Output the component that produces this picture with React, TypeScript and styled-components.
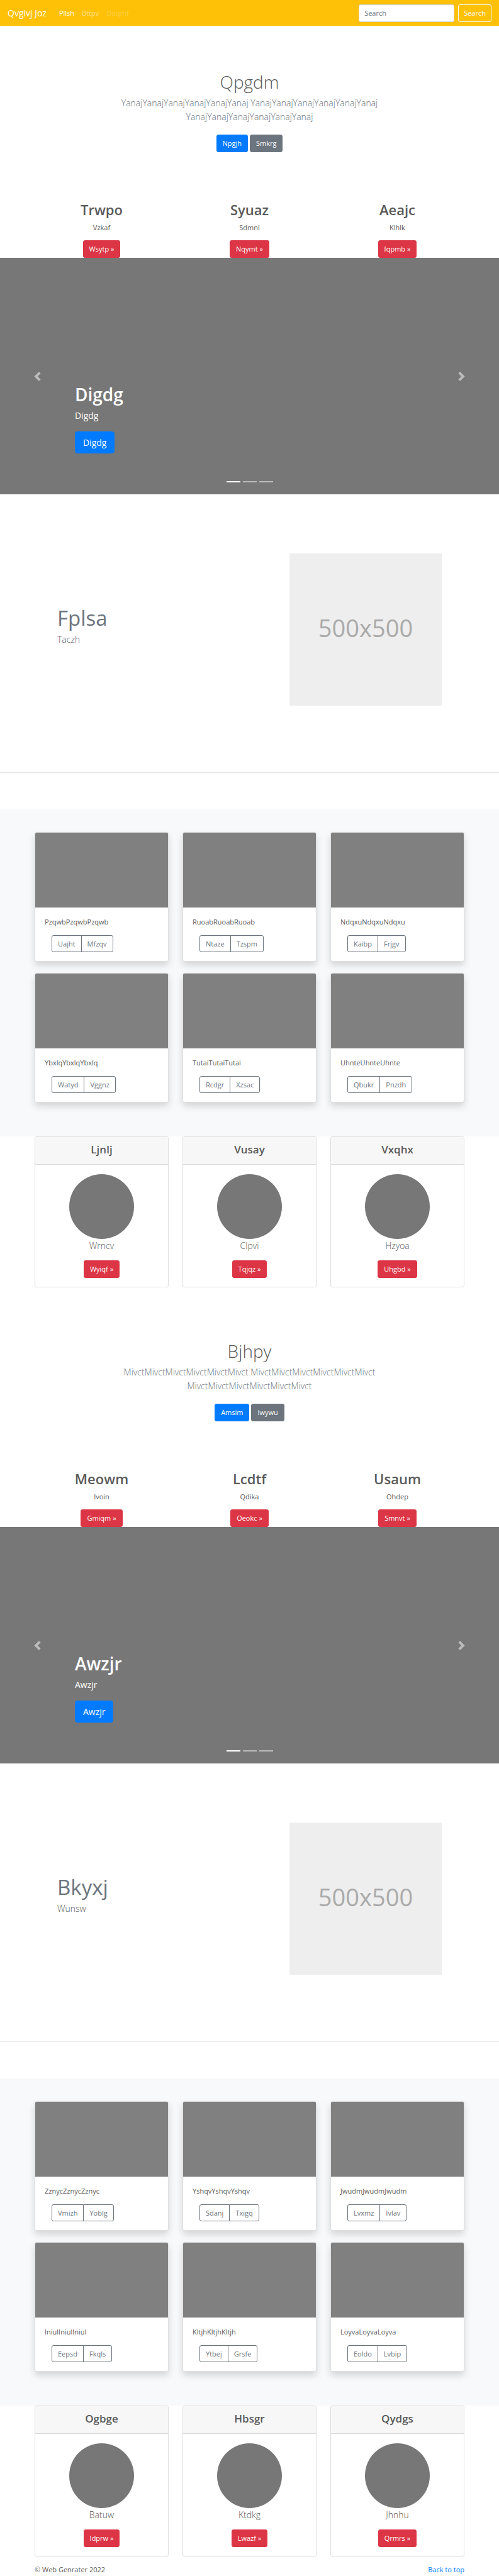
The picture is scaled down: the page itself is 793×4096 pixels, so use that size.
import React from "react";
import styled, { createGlobalStyle, css } from "styled-components";

const GlobalStyle = createGlobalStyle`
  *, *::before, *::after { box-sizing: border-box; }
  body {
    margin: 0;
    background: #fff;
    color: #5a5a5a;
    font-family: "Segoe UI", "Open Sans", "Noto Sans", sans-serif;
    font-size: 11px;
    line-height: 18px;
  }
  h1, h2, h4, p { margin: 0; }
  button, input { font-family: inherit; }
  a { color: #007bff; text-decoration: none; }
`;

/* ---------- Buttons ---------- */

const tones = { primary: "#007bff", secondary: "#6c757d", danger: "#dc3545" };

const Button = styled.button<{ $tone: keyof typeof tones; $large?: boolean }>`
  height: 28px;
  padding: 0 9px;
  border: 1px solid ${(p) => tones[p.$tone]};
  border-radius: 3px;
  background: ${(p) => tones[p.$tone]};
  color: #fff;
  font-size: 11px;
  line-height: 18px;
  cursor: pointer;
  ${(p) =>
    p.$large &&
    css`
      height: 35px;
      padding: 0 12px;
      border-radius: 4px;
      font-size: 14px;
    `}
`;

/* ---------- Navigation bar ---------- */

const Navbar = styled.nav`
  display: flex;
  align-items: center;
  height: 41px;
  padding: 0 12px;
  background: #ffc107;
`;

const Brand = styled.a`
  margin-right: 20px;
  color: #fff;
  font-size: 14px;
  line-height: 22px;
`;

const NavLinks = styled.div`
  display: flex;
  flex: 1;
  gap: 12px;
`;

const NavLink = styled.a<{ $opacity: number }>`
  color: rgba(255, 255, 255, ${(p) => p.$opacity});
`;

const SearchForm = styled.form`
  display: flex;
  gap: 6px;
`;

const SearchInput = styled.input`
  width: 152px;
  height: 28px;
  padding: 0 8px;
  border: 1px solid #ced4da;
  border-radius: 3px;
  background: #fff;
  color: #495057;
  font-size: 11px;
  &::placeholder { color: #6c757d; opacity: 1; }
`;

const SearchButton = styled.button`
  height: 28px;
  padding: 0 8px;
  border: 1px solid #f8f9fa;
  border-radius: 3px;
  background: transparent;
  color: #f8f9fa;
  font-size: 11px;
`;

/* ---------- Hero ---------- */

const Hero = styled.section`
  padding: 71px 55px 77px;
  text-align: center;
`;

const HeroTitle = styled.h1`
  margin-bottom: 5px;
  font-size: 28px;
  font-weight: 300;
  line-height: 36px;
`;

const Lead = styled.p`
  max-width: 440px;
  margin: 0 auto 17px;
  color: #6c757d;
  font-size: 14px;
  font-weight: 300;
  line-height: 22px;
`;

const ButtonRow = styled.div`
  display: flex;
  justify-content: center;
  gap: 3px;
`;

/* ---------- Three-column rows ---------- */

const Columns = styled.div`
  display: grid;
  grid-template-columns: repeat(3, 1fr);
  gap: 18px 22px;
  padding: 0 55px;
`;

const Feature = styled.div`
  display: flex;
  flex-direction: column;
  align-items: center;
`;

const FeatureTitle = styled.h2`
  margin-bottom: 6px;
  font-size: 22px;
  font-weight: 600;
  line-height: 28px;
`;

const FeatureText = styled.p`
  margin-bottom: 11px;
`;

/* ---------- Carousel ---------- */

const CarouselFrame = styled.section`
  position: relative;
  display: flex;
  flex-direction: column;
  justify-content: flex-end;
  align-items: flex-start;
  height: 376px;
  padding: 0 15% 65px;
  background: #777;
  color: #fff;
`;

const CarouselTitle = styled.h1`
  margin-bottom: 5px;
  font-size: 28px;
  font-weight: 600;
  line-height: 35px;
`;

const CarouselText = styled.p`
  margin-bottom: 14px;
  font-size: 14px;
  line-height: 22px;
`;

const Control = styled.button<{ $side: "left" | "right" }>`
  position: absolute;
  top: 0;
  bottom: 0;
  ${(p) => p.$side}: 0;
  display: flex;
  align-items: center;
  justify-content: center;
  width: 15%;
  padding: 0;
  border: 0;
  background: none;
  opacity: 0.5;
`;

const Indicators = styled.div`
  position: absolute;
  right: 0;
  bottom: 19px;
  left: 0;
  display: flex;
  justify-content: center;
  gap: 4px;
`;

const Indicator = styled.button<{ $active: boolean }>`
  width: 22px;
  height: 2px;
  padding: 0;
  border: 0;
  background: #fff;
  opacity: ${(p) => (p.$active ? 1 : 0.5)};
`;

/* ---------- Featurette ---------- */

const FeaturetteRow = styled.section`
  display: flex;
  align-items: center;
  justify-content: space-between;
  padding: 94px 91px 106px;
`;

const FeaturetteTitle = styled.h2`
  margin-bottom: 2px;
  color: #6c757d;
  font-size: 33px;
  font-weight: 400;
  line-height: 42px;
`;

const LightText = styled.p`
  margin-bottom: 12px;
  font-size: 14px;
  font-weight: 300;
  line-height: 22px;
`;

const Placeholder = styled.div`
  display: flex;
  align-items: center;
  justify-content: center;
  width: 242px;
  height: 242px;
  padding-bottom: 6px;
  background: #eee;
  color: #aaa;
  font-size: 38px;
`;

const Divider = styled.hr`
  height: 1px;
  margin: 0 0 58px;
  border: 0;
  background: #e5e5e5;
`;

/* ---------- Album ---------- */

const Album = styled.section`
  padding: 36px 0 54px;
  background: #f8f9fa;
`;

const Card = styled.article`
  overflow: hidden;
  border: 1px solid #dfdfdf;
  border-radius: 3px;
  background: #fff;
`;

const AlbumCard = styled(Card)`
  box-shadow: 0 6px 12px rgba(0, 0, 0, 0.15);
`;

const Thumbnail = styled.div`
  height: 119px;
  background: #808080;
`;

const AlbumBody = styled.div`
  padding: 14px 15px;
`;

const AlbumText = styled.p`
  margin-bottom: 12px;
`;

const ButtonGroup = styled.div`
  display: flex;
  padding-left: 11px;
`;

const GroupButton = styled.button`
  height: 27px;
  padding: 0 9px;
  border: 1px solid #6c757d;
  background: transparent;
  color: #6c757d;
  font-size: 11px;
  &:first-child { border-radius: 3px 0 0 3px; }
  &:last-child { margin-left: -1px; border-radius: 0 3px 3px 0; }
`;

/* ---------- Profile cards ---------- */

const Profiles = styled(Columns)`
  margin-bottom: 12px;
`;

const ProfileTitle = styled.h4`
  padding: 9px 0 13px;
  border-bottom: 1px solid #d8d8d8;
  background: #f7f7f7;
  font-size: 17px;
  font-weight: 600;
  line-height: 21px;
  text-align: center;
`;

const ProfileBody = styled.div`
  display: flex;
  flex-direction: column;
  align-items: center;
  padding: 15px 15px 14px;
`;

const Avatar = styled.div`
  width: 103px;
  height: 103px;
  border-radius: 50%;
  background: #777;
`;

const Footer = styled.footer`
  display: flex;
  justify-content: space-between;
  padding: 0 55px 1px;
`;

/* ---------- Content ---------- */

type Item = { title: string; text: string; action: string };

type Block = {
  hero: { title: string; text: string; actions: [string, string] };
  features: Item[];
  slide: string;
  featurette: { title: string; text: string };
  album: { word: string; actions: [string, string] }[];
  profiles: Item[];
};

const blocks: Block[] = [
  {
    hero: { title: "Qpgdm", text: "Yanaj", actions: ["Npgjh", "Smkrg"] },
    features: [
      { title: "Trwpo", text: "Vzkaf", action: "Wsytp" },
      { title: "Syuaz", text: "Sdmnl", action: "Nqymt" },
      { title: "Aeajc", text: "Klhlk", action: "Iqpmb" },
    ],
    slide: "Digdg",
    featurette: { title: "Fplsa", text: "Taczh" },
    album: [
      { word: "Pzqwb", actions: ["Uajht", "Mfzqv"] },
      { word: "Ruoab", actions: ["Ntaze", "Tzspm"] },
      { word: "Ndqxu", actions: ["Kaibp", "Frjgv"] },
      { word: "Ybxlq", actions: ["Watyd", "Vggnz"] },
      { word: "Tutai", actions: ["Rcdgr", "Xzsac"] },
      { word: "Uhnte", actions: ["Qbukr", "Pnzdh"] },
    ],
    profiles: [
      { title: "Ljnlj", text: "Wrncv", action: "Wyiqf" },
      { title: "Vusay", text: "Clpvi", action: "Tqjqz" },
      { title: "Vxqhx", text: "Hzyoa", action: "Uhgbd" },
    ],
  },
  {
    hero: { title: "Bjhpy", text: "Mivct", actions: ["Amsim", "Iwywu"] },
    features: [
      { title: "Meowm", text: "Ivoin", action: "Gmiqm" },
      { title: "Lcdtf", text: "Qdika", action: "Oeokc" },
      { title: "Usaum", text: "Ohdep", action: "Smnvt" },
    ],
    slide: "Awzjr",
    featurette: { title: "Bkyxj", text: "Wunsw" },
    album: [
      { word: "Zznyc", actions: ["Vmizh", "Yoblg"] },
      { word: "Yshqv", actions: ["Sdanj", "Txigq"] },
      { word: "Jwudm", actions: ["Lvxmz", "Ivlav"] },
      { word: "Iniul", actions: ["Eepsd", "Fkqls"] },
      { word: "Kltjh", actions: ["Ytbej", "Grsfe"] },
      { word: "Loyva", actions: ["Eoldo", "Lvbip"] },
    ],
    profiles: [
      { title: "Ogbge", text: "Batuw", action: "Idprw" },
      { title: "Hbsgr", text: "Ktdkg", action: "Lwazf" },
      { title: "Qydgs", text: "Jhnhu", action: "Qrmrs" },
    ],
  },
];

function Chevron({ d }: { d: string }) {
  return (
    <svg width="15" height="15" viewBox="0 0 8 8" fill="#fff" aria-hidden="true">
      <path d={d} />
    </svg>
  );
}

function Carousel({ word }: { word: string }) {
  return (
    <CarouselFrame>
      <CarouselTitle>{word}</CarouselTitle>
      <CarouselText>{word}</CarouselText>
      <Button $tone="primary" $large>{word}</Button>
      <Control $side="left" aria-label="Previous">
        <Chevron d="M5.25 0l-4 4 4 4 1.5-1.5-2.5-2.5 2.5-2.5-1.5-1.5z" />
      </Control>
      <Control $side="right" aria-label="Next">
        <Chevron d="M2.75 0l-1.5 1.5 2.5 2.5-2.5 2.5 1.5 1.5 4-4-4-4z" />
      </Control>
      <Indicators>
        {[0, 1, 2].map((i) => (
          <Indicator key={i} $active={i === 0} aria-label={`Slide ${i + 1}`} />
        ))}
      </Indicators>
    </CarouselFrame>
  );
}

function PageBlock({ block }: { block: Block }) {
  const { hero, features, slide, featurette, album, profiles } = block;
  const phrase = hero.text.repeat(6);
  return (
    <>
      <Hero>
        <HeroTitle>{hero.title}</HeroTitle>
        <Lead>{`${phrase} ${phrase} ${phrase}`}</Lead>
        <ButtonRow>
          <Button $tone="primary">{hero.actions[0]}</Button>
          <Button $tone="secondary">{hero.actions[1]}</Button>
        </ButtonRow>
      </Hero>
      <Columns>
        {features.map((f) => (
          <Feature key={f.title}>
            <FeatureTitle>{f.title}</FeatureTitle>
            <FeatureText>{f.text}</FeatureText>
            <Button $tone="danger">{f.action} »</Button>
          </Feature>
        ))}
      </Columns>
      <Carousel word={slide} />
      <FeaturetteRow>
        <div>
          <FeaturetteTitle>{featurette.title}</FeaturetteTitle>
          <LightText>{featurette.text}</LightText>
        </div>
        <Placeholder>500x500</Placeholder>
      </FeaturetteRow>
      <Divider />
      <Album>
        <Columns>
          {album.map((a) => (
            <AlbumCard key={a.word}>
              <Thumbnail />
              <AlbumBody>
                <AlbumText>{a.word.repeat(3)}</AlbumText>
                <ButtonGroup>
                  <GroupButton>{a.actions[0]}</GroupButton>
                  <GroupButton>{a.actions[1]}</GroupButton>
                </ButtonGroup>
              </AlbumBody>
            </AlbumCard>
          ))}
        </Columns>
      </Album>
      <Profiles>
        {profiles.map((p) => (
          <Card key={p.title}>
            <ProfileTitle>{p.title}</ProfileTitle>
            <ProfileBody>
              <Avatar />
              <LightText>{p.text}</LightText>
              <Button $tone="danger">{p.action} »</Button>
            </ProfileBody>
          </Card>
        ))}
      </Profiles>
    </>
  );
}

export default function App() {
  return (
    <>
      <GlobalStyle />
      <Navbar id="top">
        <Brand href="#">Qvgivj Joz</Brand>
        <NavLinks>
          <NavLink href="#" $opacity={1}>Pllsh</NavLink>
          <NavLink href="#" $opacity={0.5}>Bttpv</NavLink>
          <NavLink href="#" $opacity={0.25}>Ddqmf</NavLink>
        </NavLinks>
        <SearchForm role="search">
          <SearchInput type="text" placeholder="Search" aria-label="Search" />
          <SearchButton type="submit">Search</SearchButton>
        </SearchForm>
      </Navbar>
      <main>
        {blocks.map((block) => (
          <PageBlock key={block.hero.title} block={block} />
        ))}
      </main>
      <Footer>
        <p>© Web Genrater 2022</p>
        <a href="#top">Back to top</a>
      </Footer>
    </>
  );
}
